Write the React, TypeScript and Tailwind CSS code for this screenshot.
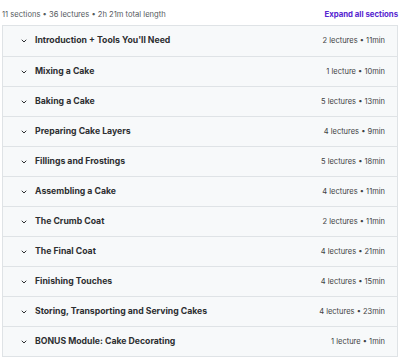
const sections = [
  { title: "Introduction + Tools You'll Need", meta: "2 lectures • 11min" },
  { title: "Mixing a Cake", meta: "1 lecture • 10min" },
  { title: "Baking a Cake", meta: "5 lectures • 13min" },
  { title: "Preparing Cake Layers", meta: "4 lectures • 9min" },
  { title: "Fillings and Frostings", meta: "5 lectures • 18min" },
  { title: "Assembling a Cake", meta: "4 lectures • 11min" },
  { title: "The Crumb Coat", meta: "2 lectures • 11min" },
  { title: "The Final Coat", meta: "4 lectures • 21min" },
  { title: "Finishing Touches", meta: "4 lectures • 15min" },
  { title: "Storing, Transporting and Serving Cakes", meta: "4 lectures • 23min" },
  { title: "BONUS Module: Cake Decorating", meta: "1 lecture • 1min" },
];

function Chevron() {
  return (
    <svg width="8" height="8" viewBox="0 0 24 24" fill="none" stroke="#2d2f31" strokeWidth="3" strokeLinecap="round" strokeLinejoin="round">
      <path d="M6 9l6 6 6-6" />
    </svg>
  );
}

export default function App() {
  return (
    <div className="w-[400px] h-[357px] bg-white font-['Inter',sans-serif] text-[#2d2f31]">
      <div className="flex items-center justify-between h-[25px] pt-[4px] px-[2px]">
        <span className="text-[7.6px] text-[#555a5e]">11 sections • 36 lectures • 2h 21m total length</span>
        <span className="text-[7.8px] font-bold text-[#5624d0]">Expand all sections</span>
      </div>
      <div className="mx-[2px] border border-[#dfe3e6]">
        {sections.map((s, i) => (
          <div
            key={i}
            className={`flex items-center h-[30px] bg-[#f7f9fa] pl-[17px] pr-[12px] ${i > 0 ? "border-t border-[#dfe3e6]" : ""}`}
          >
            <Chevron />
            <span className="ml-[7px] flex-1 text-[8.7px] font-bold">{s.title}</span>
            <span className="text-[7.5px] text-[#3e4143]">{s.meta}</span>
          </div>
        ))}
      </div>
    </div>
  );
}
